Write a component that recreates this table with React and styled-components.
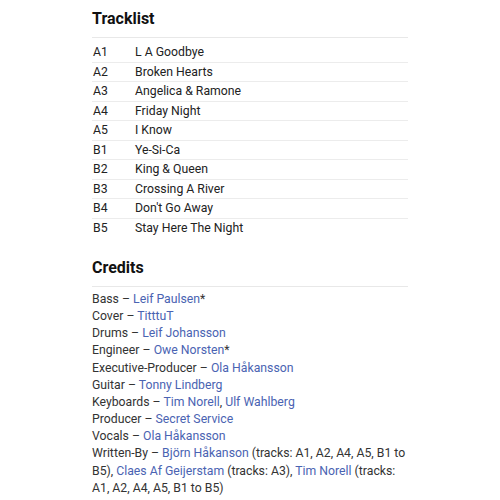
import React from "react";
import styled, { createGlobalStyle } from "styled-components";

const GlobalStyle = createGlobalStyle`
  body {
    margin: 0;
    background: #ffffff;
    font-family: Roboto, "Liberation Sans", sans-serif;
    color: #222;
  }
`;

const Page = styled.div`
  width: 316px;
  padding: 9px 0 0 92px;
`;

const Heading = styled.h2`
  margin: 0;
  font-size: 16px;
  line-height: 20px;
  font-weight: 700;
  color: #111;
  padding-bottom: 8px;
  border-bottom: 1px solid #e8e8e8;
  margin-top: ${(p) => (p.$gap ? "21px" : "0")};
`;

const Tracks = styled.div`
  padding-top: 4px;
`;

const TrackRow = styled.div`
  display: flex;
  align-items: center;
  height: 19.5px;
  font-size: 12.25px;
  color: #222;
  border-top: ${(p) => (p.$first ? "none" : "1px solid #ececec")};
  box-sizing: border-box;
`;

const Pos = styled.span`
  width: 42px;
  padding-left: 1px;
`;

const Credits = styled.div`
  padding-top: 4px;
  font-size: 12.25px;
  line-height: 17.15px;
  color: #333;
`;

const Credit = styled.div``;

const Link = styled.a`
  color: #4a63b2;
  text-decoration: none;
`;

const tracks = [
  ["A1", "L A Goodbye"],
  ["A2", "Broken Hearts"],
  ["A3", "Angelica & Ramone"],
  ["A4", "Friday Night"],
  ["A5", "I Know"],
  ["B1", "Ye-Si-Ca"],
  ["B2", "King & Queen"],
  ["B3", "Crossing A River"],
  ["B4", "Don't Go Away"],
  ["B5", "Stay Here The Night"],
];

const credits = [
  ["Bass", [["Leif Paulsen", "*"]]],
  ["Cover", [["TitttuT"]]],
  ["Drums", [["Leif Johansson"]]],
  ["Engineer", [["Owe Norsten", "*"]]],
  ["Executive-Producer", [["Ola Håkansson"]]],
  ["Guitar", [["Tonny Lindberg"]]],
  ["Keyboards", [["Tim Norell"], ["Ulf Wahlberg"]]],
  ["Producer", [["Secret Service"]]],
  ["Vocals", [["Ola Håkansson"]]],
  [
    "Written-By",
    [
      ["Björn Håkanson", " (tracks: A1, A2, A4, A5, B1 to B5)"],
      ["Claes Af Geijerstam", " (tracks: A3)"],
      ["Tim Norell", " (tracks: A1, A2, A4, A5, B1 to B5)"],
    ],
  ],
];

export default function App() {
  return (
    <>
      <GlobalStyle />
      <Page>
        <Heading>Tracklist</Heading>
        <Tracks>
          {tracks.map(([pos, title], i) => (
            <TrackRow key={pos} $first={i === 0}>
              <Pos>{pos}</Pos>
              <span>{title}</span>
            </TrackRow>
          ))}
        </Tracks>

        <Heading $gap>Credits</Heading>
        <Credits>
          {credits.map(([role, names]) => (
            <Credit key={role}>
              {role} –{" "}
              {names.map(([name, extra], i) => (
                <React.Fragment key={name}>
                  {i > 0 && ", "}
                  <Link href="#">{name}</Link>
                  {extra}
                </React.Fragment>
              ))}
            </Credit>
          ))}
        </Credits>
      </Page>
    </>
  );
}
